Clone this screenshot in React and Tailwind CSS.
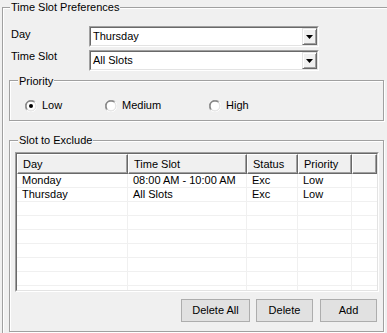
const etched = 'border border-[#a0a0a0] shadow-[inset_1px_1px_0_#fff,1px_1px_0_#fff]';

function GroupTitle({ children, nudge }) {
  return (
    <div className={`${nudge ? '-mt-[6px] ml-[8px]' : '-mt-[7px] ml-[8px]'} w-fit h-[13px] bg-[#f0f0f0] px-[1px]`}>
      {children}
    </div>
  );
}

function Combo({ value }) {
  return (
    <div className="h-[21px] w-[230px] border border-t-[#a0a0a0] border-l-[#a0a0a0] border-r-white border-b-white">
      <div className="h-full flex border border-t-[#696969] border-l-[#696969] border-r-[#e3e3e3] border-b-[#e3e3e3] bg-white">
        <div className="flex-1 flex items-center pl-[2px]">{value}</div>
        <div className="w-[15px] flex items-center justify-center bg-[#f0f0f0] border border-t-[#e3e3e3] border-l-[#e3e3e3] border-r-[#696969] border-b-[#696969] shadow-[inset_1px_1px_0_#fff,inset_-1px_-1px_0_#a0a0a0]">
          <svg width="7" height="4" viewBox="0 0 7 4">
            <path d="M0 0h7L3.5 4z" fill="#000" />
          </svg>
        </div>
      </div>
    </div>
  );
}

function Radio({ label, checked, width }) {
  return (
    <div className={`${width} flex items-center h-[13px]`}>
      <svg width="12" height="12" viewBox="0 0 12 12">
        <path d="M1.76 10.24A6 6 0 0 1 10.24 1.76" stroke="#a0a0a0" fill="none" />
        <path d="M10.24 1.76A6 6 0 0 1 1.76 10.24" stroke="#fff" fill="none" />
        <path d="M2.46 9.54A5 5 0 0 1 9.54 2.46" stroke="#696969" fill="none" />
        <path d="M9.54 2.46A5 5 0 0 1 2.46 9.54" stroke="#e3e3e3" fill="none" />
        <circle cx="6" cy="6" r="4" fill="#fff" />
        {checked && <circle cx="6" cy="6" r="2" fill="#000" />}
      </svg>
      <span className="ml-[5px]">{label}</span>
    </div>
  );
}

const columns = [
  { title: 'Day', w: 'w-[111px]' },
  { title: 'Time Slot', w: 'w-[119px]' },
  { title: 'Status', w: 'w-[51px]' },
  { title: 'Priority', w: 'w-[54px]' },
];

const rows = [
  ['Monday', '08:00 AM - 10:00 AM', 'Exc', 'Low'],
  ['Thursday', 'All Slots', 'Exc', 'Low'],
  [], [], [], [], [], [], [],
];

const headCell =
  'h-full flex items-center pl-[5px] bg-[#f0f0f0] border border-t-white border-l-white border-r-[#696969] border-b-[#696969] shadow-[inset_-1px_-1px_0_#a0a0a0]';

function SlotList() {
  return (
    <div className="ml-[5px] mt-[5px] w-[364px] h-[140px] border border-t-[#a0a0a0] border-l-[#a0a0a0] border-r-white border-b-white">
      <div className="h-full overflow-hidden bg-white border border-t-[#696969] border-l-[#696969] border-r-[#e3e3e3] border-b-[#e3e3e3]">
        <div className="flex h-[20px]">
          {columns.map((c) => (
            <div key={c.title} className={`${c.w} ${headCell}`}>{c.title}</div>
          ))}
          <div className={`flex-1 ${headCell}`} />
        </div>
        {rows.map((r, i) => (
          <div key={i} className="flex h-[14px] border-b border-[#f0f0f0]">
            {columns.map((c, j) => (
              <div key={c.title} className={`${c.w} h-full flex items-center pl-[5px] border-r border-[#f0f0f0] whitespace-nowrap`}>
                {r[j] || ''}
              </div>
            ))}
            <div className="flex-1" />
          </div>
        ))}
      </div>
    </div>
  );
}

function Button({ children, className }) {
  return (
    <div className={`${className} h-[23px] flex items-center justify-center border border-[#adadad] bg-[#e1e1e1]`}>
      {children}
    </div>
  );
}

export default function App() {
  return (
    <div className="w-[387px] h-[333px] overflow-hidden bg-[#f0f0f0] text-black text-[11px] leading-[13px] font-['Liberation_Sans',Arial,sans-serif]">
      <div className={`ml-[2px] mt-[7px] w-[400px] h-[400px] ${etched}`}>
        <div className="-mt-[7px] ml-[7px] w-fit h-[13px] bg-[#f0f0f0] px-[1px]">Time Slot Preferences</div>

        <div className="mt-[12px] pl-[8px] grid grid-cols-[78px_230px] gap-y-[3px]">
          <div className="mt-[2px]">Day</div>
          <Combo value="Thursday" />
          <div>Time Slot</div>
          <Combo value="All Slots" />
        </div>

        <div className={`ml-[6px] mt-[9px] w-[375px] h-[41px] ${etched}`}>
          <GroupTitle nudge>Priority</GroupTitle>
          <div className="mt-[11px] pl-[15px] flex">
            <Radio label="Low" checked width="w-[80px]" />
            <Radio label="Medium" width="w-[104px]" />
            <Radio label="High" width="w-[80px]" />
          </div>
        </div>

        <div className={`ml-[6px] mt-[19px] w-[375px] h-[192px] ${etched}`}>
          <GroupTitle>Slot to Exclude</GroupTitle>
          <SlotList />
          <div className="mt-[7px] pr-[6px] flex justify-end">
            <Button className="w-[69px]">Delete All</Button>
            <Button className="w-[57px] ml-[6px]">Delete</Button>
            <Button className="w-[57px] ml-[7px]">Add</Button>
          </div>
        </div>
      </div>
    </div>
  );
}
